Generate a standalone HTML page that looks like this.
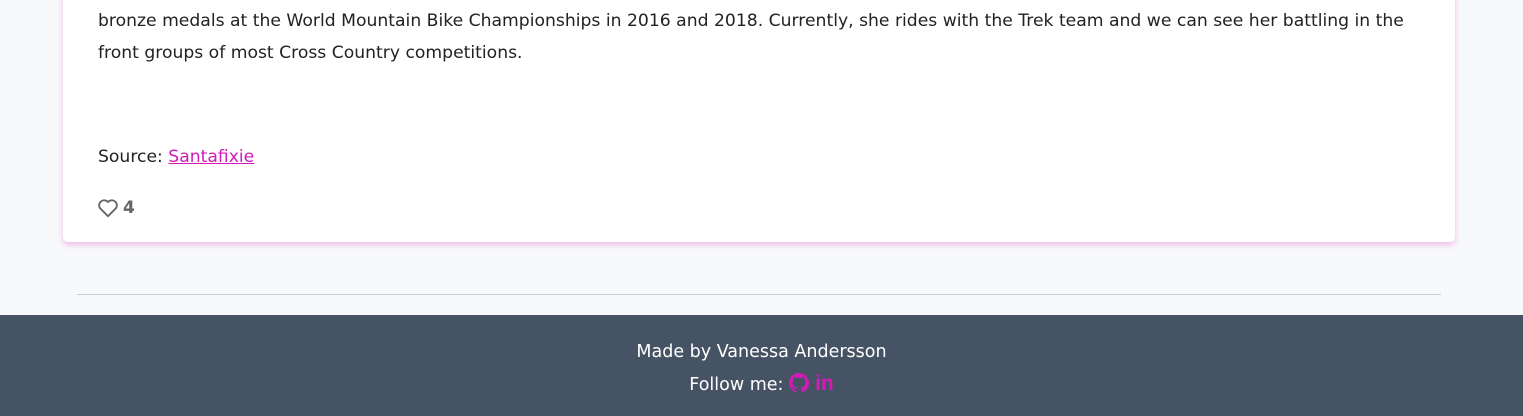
<!DOCTYPE html>
<html><head><style>
body{margin:0;width:1523px;height:416px;background:#f8f9fa;font-family:"DejaVu Sans","Liberation Sans",sans-serif;overflow:hidden;position:relative}
.card{position:absolute;left:63px;top:-40px;width:1392px;height:282px;background:#fff;border-radius:5px;box-shadow:0 3px 6px rgba(230,120,220,.45)}
.t{position:absolute;left:98px;font-size:17.2px;color:#222;line-height:32px;width:1320px}
a{color:#d11ab8}
hr{position:absolute;left:77px;top:294px;width:1364px;margin:0;border:0;border-top:1px solid #ccc}
.f{position:absolute;left:0;top:315px;width:1523px;height:101px;background:#465364;color:#fff;text-align:center}
</style></head><body>
<div class="card"></div>
<div class="t" style="top:5px">bronze medals at the World Mountain Bike Championships in 2016 and 2018. Currently, she rides with the Trek team and we can see her battling in the front groups of most Cross Country competitions.</div>
<div class="t" style="top:141px">Source: <a href="#">Santafixie</a></div>
<div style="position:absolute;left:97px;top:198px;display:flex;align-items:center;color:#666;font-weight:bold;font-size:17px">
<svg width="22" height="20" viewBox="0 0 24 22"><path d="M12 20 L3.5 11.5 A5 5 0 0 1 12 4.5 A5 5 0 0 1 20.5 11.5 Z" fill="none" stroke="#666" stroke-width="2" stroke-linejoin="round"/></svg><span style="margin-left:4px">4</span></div>
<hr>
<div class="f"><div style="position:absolute;top:27px;width:100%;font-size:17.5px">Made by Vanessa Andersson</div>
<div style="position:absolute;top:57px;width:100%;font-size:17.5px">Follow me: <span style="color:#d11ab8;font-weight:bold"><svg width="20" height="20" viewBox="0 0 16 16" style="vertical-align:-3px"><path fill="#d11ab8" d="M8 0C3.6 0 0 3.6 0 8c0 3.5 2.3 6.5 5.5 7.6.4.1.5-.2.5-.4v-1.4c-2.2.5-2.7-1-2.7-1-.4-.9-.9-1.2-.9-1.2-.7-.5.1-.5.1-.5.8.1 1.2.8 1.2.8.7 1.2 1.9.9 2.3.7.1-.5.3-.9.5-1.1-1.8-.2-3.6-.9-3.6-4 0-.9.3-1.6.8-2.1-.1-.2-.4-1 .1-2.1 0 0 .7-.2 2.2.8.6-.2 1.3-.3 2-.3s1.4.1 2 .3c1.5-1 2.2-.8 2.2-.8.4 1.1.2 1.9.1 2.1.5.6.8 1.3.8 2.1 0 3.1-1.9 3.7-3.6 3.9.3.3.5.8.5 1.5v2.2c0 .2.1.5.6.4C13.7 14.5 16 11.5 16 8c0-4.4-3.6-8-8-8z"/></svg> <span style="font-family:'Liberation Sans',sans-serif;font-size:21px">in</span></span></div></div>
</body></html>
